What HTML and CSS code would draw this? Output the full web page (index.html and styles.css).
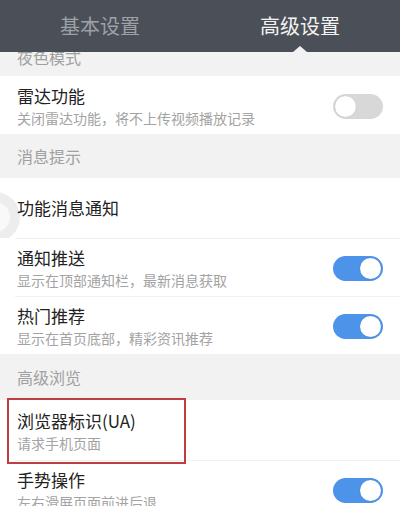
FILE: index.html
```html
<!DOCTYPE html>
<html lang="zh">
<head>
<meta charset="utf-8">
<link rel="stylesheet" href="styles.css">
</head>
<body>
<div class="screen">
  <div class="tabs">
    <div class="tab">基本设置</div>
    <div class="tab active">高级设置</div>
  </div>
  <div class="section cut"><span>夜色模式</span></div>
  <div class="row">
    <div class="text"><div class="title">雷达功能</div><div class="sub">关闭雷达功能，将不上传视频播放记录</div></div>
    <div class="switch"></div>
  </div>
  <div class="section">消息提示</div>
  <div class="row single">
    <div class="float-ring"></div>
    <div class="text"><div class="title">功能消息通知</div></div>
  </div>
  <div class="row line">
    <div class="text"><div class="title">通知推送</div><div class="sub">显示在顶部通知栏，最新消息获取</div></div>
    <div class="switch on"></div>
  </div>
  <div class="row line">
    <div class="text"><div class="title">热门推荐</div><div class="sub">显示在首页底部，精彩资讯推荐</div></div>
    <div class="switch on"></div>
  </div>
  <div class="section tall">高级浏览</div>
  <div class="row highlight">
    <div class="text"><div class="title">浏览器标识(UA)</div><div class="sub">请求手机页面</div></div>
  </div>
  <div class="row line">
    <div class="text"><div class="title">手势操作</div><div class="sub">左右滑屏页面前进后退</div></div>
    <div class="switch on"></div>
  </div>
</div>
</body>
</html>
```
FILE: styles.css
```css
* { box-sizing: border-box; }
html, body { margin: 0; padding: 0; background: #fff; }
body { font-family: "Noto Sans CJK SC", "Noto Sans", sans-serif; }
.screen { position: relative; width: 400px; height: 506px; overflow: hidden; background: #fff; }
.tabs { position: relative; height: 52px; background: #4b4f57; display: flex; z-index: 2; }
.tab { flex: 1; text-align: center; font-size: 20px; line-height: 52px; color: #9da1a8; }
.tab.active { color: #f3f3f3; position: relative; }
.tab.active::after {
  content: ""; position: absolute; left: 50%; bottom: 0; margin-left: -7px;
  border-left: 7px solid transparent; border-right: 7px solid transparent;
  border-bottom: 6px solid #f2f2f2;
}
.section { background: #f2f2f2; color: #a0a0a0; font-size: 16px; height: 44px; line-height: 44px; padding-left: 17px; }
.section.tall { height: 46px; line-height: 46px; }
.section.cut { height: 24px; line-height: 10px; overflow: hidden; }
.row { position: relative; display: flex; align-items: center; justify-content: space-between; height: 58px; padding: 8px 17px 6px 17px; background: #fff; }
.row.single { height: 60px; padding-top: 6px; }
.row.line::before { content: ""; position: absolute; left: 15px; right: 0; top: 0; height: 1px; background: #f1f1f1; }
.text { position: relative; z-index: 1; }
.title { font-size: 17px; line-height: 22px; color: #222; }
.sub { font-size: 14px; line-height: 20px; color: #a3a3a3; margin-top: 1px; }
.row.highlight { height: 60px; z-index: 3; }
.row.highlight::after {
  content: ""; position: absolute; left: 7px; top: -2px; width: 175px; height: 62px;
  border: 2.5px solid #c23b3f; z-index: 3;
}
.switch { position: relative; width: 50px; height: 25px; border-radius: 13px; background: #d8d8d8; flex: none; }
.switch::after {
  content: ""; position: absolute; top: 2px; left: 2px; width: 21px; height: 21px; border-radius: 50%;
  background: #fff; box-shadow: 0 0 1px rgba(0,0,0,0.2);
}
.switch.on { background: #4c93e9; }
.switch.on::after { left: 27px; }
.float-ring {
  position: absolute; left: -30px; top: 14px; width: 50px; height: 50px; border-radius: 50%;
  border: 10px solid #ededed; background: #f9f9f9;
}
```
